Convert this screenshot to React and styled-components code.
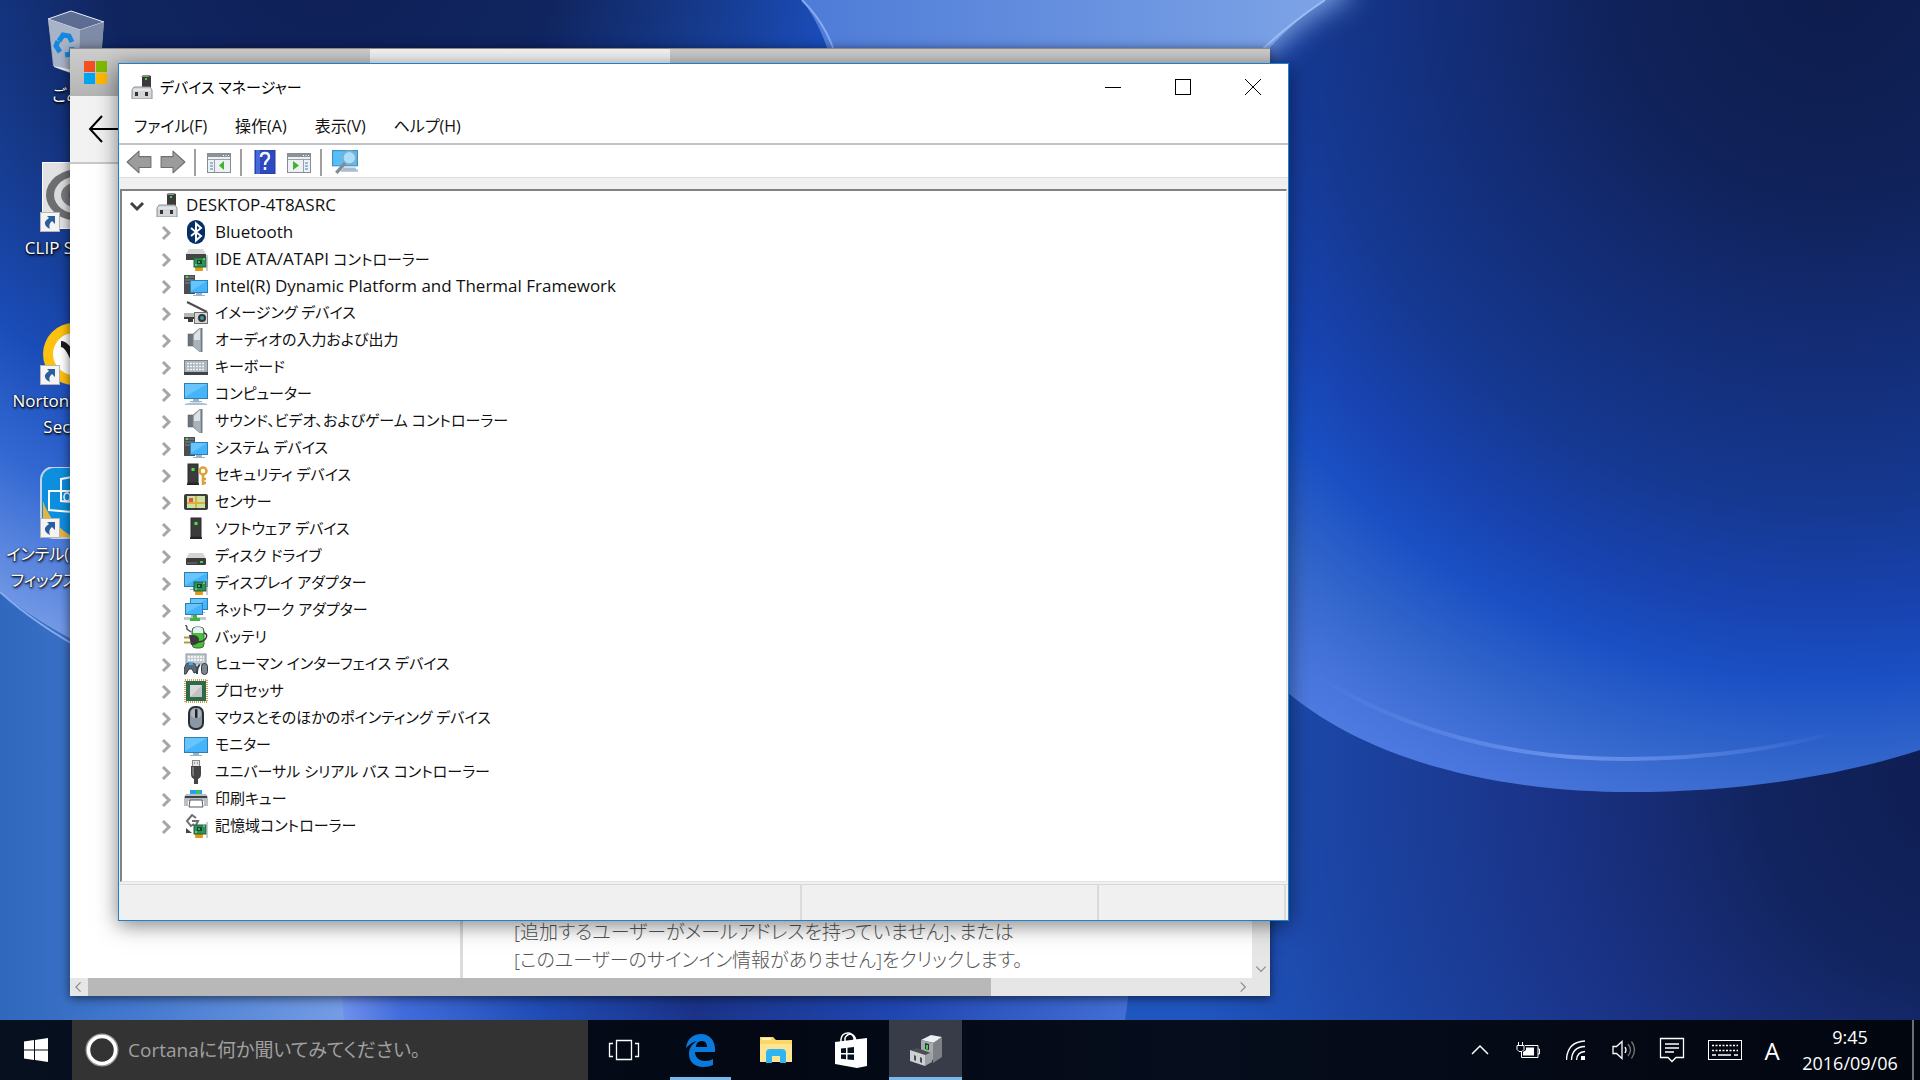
import React from "react";
import styled, { createGlobalStyle } from "styled-components";

const GlobalStyle = createGlobalStyle`
  * {
    box-sizing: border-box;
  }
  body {
    margin: 0;
    overflow: hidden;
    font-family: "Open Sans", "Noto Sans CJK JP", sans-serif;
    font-feature-settings: "palt";
    font-size: 16px;
    color: #111;
  }
  button {
    border: none;
    padding: 0;
    background: none;
    font: inherit;
    font-feature-settings: inherit;
    color: inherit;
  }
  svg {
    display: block;
  }
`;

const Screen = styled.div`
  display: flex;
  flex-direction: column;
  height: 100vh;
  background: #1c4cab;
`;

const Workspace = styled.main`
  flex: 1;
  min-height: 0;
  position: relative;
  overflow: hidden;
`;

const WallpaperSvg = styled.svg`
  position: absolute;
  inset: 0;
  width: 100%;
  height: 100%;
`;

const Shortcuts = styled.div`
  position: relative;
  display: flex;
  flex-direction: column;
  width: 150px;
`;

const Shortcut = styled.button`
  display: flex;
  flex-direction: column;
  align-items: center;
  height: 153px;
  padding-top: 8px;
  color: #fff;
  font-size: ${(p) => (p.$latin ? "17px" : "16px")};
  line-height: 26px;
  white-space: nowrap;
  text-shadow: 1px 1px 3px #000, 0 1px 2px #000;
`;

const Window = styled.section`
  position: absolute;
  display: flex;
  flex-direction: column;
  background: #fff;
`;

const BrowserWindow = styled(Window)`
  top: 48px;
  right: 650px;
  bottom: 24px;
  left: 70px;
  border-top: 1px solid #8d8d8d;
  box-shadow: 0 2px 10px rgba(0, 0, 0, 0.6);
`;

const TabStrip = styled.div`
  display: flex;
  height: 47px;
  background: linear-gradient(#cdcdcd, #b4b4b4);
`;

const SiteTab = styled.div`
  width: 300px;
  padding: 12px 14px;
`;

const ActiveTab = styled.div`
  width: 300px;
  background: linear-gradient(#f4f4f4, #e4e4e4);
`;

const BrowserBar = styled.div`
  display: flex;
  align-items: center;
  height: 68px;
  padding-left: 17px;
  background: #f2f2f2;
  border-bottom: 2px solid #c9c9c9;
`;

const BrowserBody = styled.div`
  flex: 1;
  display: flex;
  min-height: 0;
`;

const PageNav = styled.div`
  width: 393px;
  border-right: 3px solid #dcdcdc;
`;

const PageText = styled.div`
  flex: 1;
  display: flex;
  align-items: flex-end;
  padding: 0 0 4px 51px;
  color: #555;
  font-size: 19px;
  font-weight: 300;
  line-height: 28px;

  p {
    margin: 0;
  }
`;

const VerticalBar = styled.div`
  display: flex;
  align-items: flex-end;
  justify-content: center;
  width: 18px;
  background: #e6e6e6;
`;

const HorizontalBar = styled.div`
  display: flex;
  align-items: center;
  height: 18px;
  background: #e6e6e6;
`;

const ScrollThumb = styled.div`
  width: 903px;
  height: 18px;
  background: #b8b8b8;
`;

const ScrollButton = styled.button`
  display: flex;
  align-items: center;
  justify-content: center;
  width: 18px;
  height: 18px;
  margin-left: ${(p) => (p.$end ? "auto" : "0")};
  margin-right: ${(p) => (p.$end ? "18px" : "0")};
`;

const ManagerWindow = styled(Window)`
  top: 63px;
  right: 631px;
  bottom: 99px;
  left: 118px;
  border: 1px solid #1883d7;
  box-shadow: 0 4px 20px rgba(0, 0, 0, 0.5);
`;

const TitleBar = styled.header`
  display: flex;
  align-items: center;
  height: 45px;
  padding-left: 11px;
  gap: 6px;
  color: #000;

  h1 {
    flex: 1;
    margin: 0;
    font-size: 15px;
    font-weight: 400;
  }
`;

const WindowButtons = styled.div`
  display: flex;
  align-self: stretch;
`;

const WindowButton = styled.button`
  display: flex;
  align-items: center;
  justify-content: center;
  width: 70px;
`;

const MenuBar = styled.nav`
  display: flex;
  align-items: center;
  gap: 28px;
  height: 36px;
  padding: 0 0 2px 15px;
  border-bottom: 2px solid #c0c3c9;
`;

const Toolbar = styled.div`
  display: flex;
  align-items: center;
  gap: 8px;
  height: 33px;
  padding: 2px 0 0 7px;
  border-bottom: 1px solid #dcdcdc;
`;

const ToolButton = styled.button`
  display: flex;
  justify-content: center;
  width: 26px;
`;

const Separator = styled.span`
  width: 2px;
  height: 27px;
  margin-right: 2px;
  background: #a0a0a0;
`;

const TreeFrame = styled.div`
  flex: 1;
  display: flex;
  min-height: 0;
  padding: 11px 1px 2px 1px;
  background: #f0f0f0;
`;

const Tree = styled.ul`
  flex: 1;
  margin: 0;
  padding: 0;
  list-style: none;
  background: #fff;
  border: 2px solid #828282;
  border-right: 1px solid #e3e3e3;
  border-bottom: 1px solid #e3e3e3;
`;

const Branch = styled.ul`
  margin: 0;
  padding: 0;
  list-style: none;
`;

const Row = styled.div`
  display: flex;
  align-items: center;
  gap: 7px;
  height: 27px;
  padding-left: ${(p) => (p.$depth ? "35px" : "6px")};
  line-height: 27px;
  white-space: nowrap;
`;

const Toggle = styled.button`
  display: flex;
  align-items: center;
  justify-content: center;
  width: 18px;
  height: 20px;
  margin-right: 2px;
  padding-top: 2px;
`;

const DeviceName = styled.span`
  font-size: 15px;
`;

const Latin = styled.span`
  font-size: 17px;
`;

const StatusBar = styled.footer`
  display: flex;
  height: 36px;
  border-top: 1px solid #d8d8d8;
  background: #f0f0f0;
`;

const StatusCell = styled.div`
  flex: ${(p) => p.$grow};
  margin-right: 2px;
  border-right: 2px solid #dadada;
`;

const Taskbar = styled.footer`
  display: flex;
  height: 60px;
  background: linear-gradient(90deg, #07101f, #030814 40%, #060d1c 62%, #02060f);
  color: #fff;
`;

const StartButton = styled.button`
  display: flex;
  align-items: center;
  justify-content: center;
  width: 72px;
`;

const SearchBox = styled.label`
  display: flex;
  align-items: center;
  gap: 9px;
  width: 516px;
  padding-left: 13px;
  background: #333;
`;

const SearchInput = styled.input`
  flex: 1;
  padding: 0;
  border: none;
  outline: none;
  background: none;
  color: #fff;
  font: inherit;
  font-size: 19px;
  font-feature-settings: "palt";

  &::placeholder {
    color: #a0a0a0;
    opacity: 1;
  }
`;

const TaskButtons = styled.div`
  display: flex;
  gap: 2px;
  padding-left: 4px;
`;

const TaskButton = styled.button`
  position: relative;
  display: flex;
  align-items: center;
  justify-content: center;
  width: 73px;
  background: ${(p) => (p.$active ? "#383c48" : "transparent")};

  &::after {
    content: "";
    position: absolute;
    right: ${(p) => (p.$active ? "0" : "6px")};
    bottom: 0;
    left: ${(p) => (p.$active ? "0" : "6px")};
    height: 3px;
    background: ${(p) => (p.$active || p.$open ? "#76b9ed" : "transparent")};
  }
`;

const Tray = styled.div`
  display: flex;
  margin-left: auto;
`;

const TrayButton = styled.button`
  display: flex;
  align-items: center;
  justify-content: center;
  width: ${(p) => p.$width || 48}px;
  font-size: 24px;
`;

const Clock = styled.button`
  width: 120px;
  font-size: 18px;
  line-height: 26px;
`;

const ShowDesktop = styled.button`
  width: 8px;
  margin-left: 2px;
  border-left: 2px solid #6a6e76;
`;

/* ---------- small drawings shared by several icons ---------- */

const Tower = ({ x = 0 }) => (
  <g transform={`translate(${x} 0)`}>
    <path d="M3 22h12v-1.500l-1.500-1.500h-9L3 20.500z" fill="#222" />
    <rect x="4" y="1" width="10" height="19" fill="#3b3b3b" stroke="#2a2a2a" />
    <rect x="7.500" y="5" width="3" height="3" fill="#44e844" />
  </g>
);

const Screenlet = ({ x = 0, y = 0, w = 24, h = 15 }) => (
  <g>
    <path d={`M${x + w / 2 - 3} ${y + h}h6v2h3v1h-12v-1h3z`} fill="#9fb2c4" />
    <rect x={x + 0.5} y={y + 0.5} width={w - 1} height={h - 1} fill="#45b4fb" stroke="#2c7fae" />
    <path d={`M${x + 1} ${y + 1}h${w - 2}L${x + 1} ${y + h - 2}z`} fill="#7fcffd" opacity="0.6" />
  </g>
);

const Card = () => (
  <g>
    <rect x="11" y="20" width="8" height="4" fill="#f0a41c" />
    <path d="M13 20v4M15 20v4M17 20v4" stroke="#b87200" strokeWidth="0.5" />
    <rect x="10" y="11" width="12" height="9" fill="#2f9058" stroke="#1d6238" />
    <rect x="13" y="13" width="5" height="4" fill="#0f4a28" />
    <path d="M14 15h2M19 12h2M11 18h2" stroke="#9ff0b8" />
    <path d="M23 8v16" stroke="#9aa0a5" />
  </g>
);

const Speaker = () => (
  <g>
    <rect x="4" y="6" width="6" height="12" fill="#6c747c" stroke="#4f565c" strokeWidth="0.5" />
    <path d="M9 6 16 0h2v24h-2L9 18z" fill="#aab2ba" stroke="#7b838b" strokeWidth="0.7" />
    <path d="M10 7l6-6v11h-6z" fill="#dde2e6" />
    <path d="M17.500 0v24" stroke="#747c84" strokeWidth="1.5" />
  </g>
);

const SystemDrawing = () => (
  <g>
    <rect x="0" y="1" width="11" height="19" fill="#4a4e52" />
    <path d="M1 3h9M1 6h9M1 9h9" stroke="#85898d" />
    <rect x="2" y="2" width="2" height="2" fill="#4be04b" />
    <Screenlet x={6} y={6} w={18} h={13} />
  </g>
);

const drawings = {
  root: (
    <g>
      <path d="M12 12V1l6-1 3 1v11z" fill="#3a3a3a" />
      <path d="M11 2l2-2h7l-1 2z" fill="#8a8a8a" />
      <rect x="15" y="3" width="2" height="2" fill="#39d839" />
      <path d="M4 12h16l2 3v9H2v-9z" fill="#d3d5d9" stroke="#8c9096" />
      <path d="M3 15h18" stroke="#f3f3f3" />
      <path d="M5 17h3v4H5zM15 17h3v4h-3z" fill="#333" />
    </g>
  ),
  bluetooth: (
    <g>
      <rect x="3" y="0" width="18" height="24" rx="9" fill="#062f66" />
      <path d="M7 8l10 8-5 4.500v-17L17 8 7 16" fill="none" stroke="#fff" strokeWidth="2" />
    </g>
  ),
  ide: (
    <g>
      <path d="M5 2h14l3 5H2z" fill="#d8d8d8" />
      <rect x="2" y="7" width="20" height="6" fill="#444" />
      <Card />
    </g>
  ),
  system: <SystemDrawing />,
  imaging: (
    <g>
      <path d="M3 1l20 10" stroke="#4d4d4d" strokeWidth="2" />
      <path d="M0 12h12v4H0z" fill="#b5b5b5" />
      <path d="M0 16h12v2h-3v3H4v-3H0z" fill="#3c3c3c" />
      <rect x="10.500" y="11.500" width="13" height="11" fill="#d5d5d5" stroke="#707070" />
      <circle cx="18" cy="17" r="4" fill="#333" />
      <circle cx="18" cy="17" r="2" fill="#3d98a8" />
    </g>
  ),
  speaker: <Speaker />,
  keyboard: (
    <g>
      <rect x="0.5" y="5.500" width="23" height="14" fill="#aeb6be" stroke="#7d858d" />
      <path d="M3 8.500h18M3 11.500h18M3 14.500h18" stroke="#f2f4f6" strokeWidth="1.5" strokeDasharray="2 1" />
      <rect x="0" y="17" width="24" height="3" fill="#3f4448" />
    </g>
  ),
  computer: (
    <g>
      <Screenlet y={1} h={16} />
      <path d="M1 22c5-2 17-2 22 0v1H1z" fill="#a9c0d4" />
    </g>
  ),
  security: (
    <g>
      <Tower x={0} />
      <circle cx="19" cy="8" r="3.5" fill="none" stroke="#d9a23a" strokeWidth="2.5" />
      <path d="M19 11v11M19 16h3M19 20h3" stroke="#d9a23a" strokeWidth="2.5" />
    </g>
  ),
  sensor: (
    <g>
      <rect x="0" y="4" width="24" height="16" rx="2" fill="#3d3d3d" />
      <rect x="3" y="6" width="18" height="12" fill="#c9e3a5" />
      <path d="M3 13h18M12 6v12" stroke="#e0ad3a" strokeWidth="2" />
      <rect x="5" y="8" width="4" height="4" fill="#e2504e" />
    </g>
  ),
  software: <Tower x={3} />,
  disk: (
    <g>
      <path d="M5 9h14l3 6H2z" fill="#d4d4d4" />
      <rect x="2" y="14" width="20" height="7" rx="1" fill="#3c3c3c" />
      <rect x="16" y="17" width="3" height="2" fill="#38dd38" />
      <path d="M3 19h10" stroke="#777" />
    </g>
  ),
  display: (
    <g>
      <Screenlet y={1} h={15} />
      <Card />
    </g>
  ),
  network: (
    <g>
      <Screenlet x={6} y={0} w={18} h={12} />
      <Screenlet x={1} y={5} w={18} h={12} />
      <path d="M0 20.500h22" stroke="#c4c9cd" strokeWidth="3" />
      <path d="M6 20h3v-3h4v3h3v3H6z" fill="#41b33f" />
    </g>
  ),
  battery: (
    <g>
      <rect x="8" y="2" width="12" height="21" rx="4" fill="#49bd3c" stroke="#3d6d38" />
      <path d="M9 8V5q0-3 5-3t5 3v3z" fill="#e9edf7" />
      <path d="M20 8q4 1 2 5t-9 4" fill="none" stroke="#333" strokeWidth="1.5" />
      <path d="M1 0q2 0 2 4l4 3" fill="none" stroke="#555" strokeWidth="1.5" />
      <path d="M0 12.500h7M0 17.500h7" stroke="#b39a45" strokeWidth="2" />
      <path d="M5 10h5q5 1 5 5t-5 5H7z" fill="#3b3b3b" />
    </g>
  ),
  hid: (
    <g>
      <rect x="2" y="2" width="20" height="10" fill="#c2cad2" stroke="#8c949c" />
      <path d="M4 5h16M4 8h16" stroke="#fff" strokeDasharray="2 1" strokeWidth="1.5" />
      <path d="M0 22q0-10 4-11h5q4 1 4 9l-3 1-2-4H5l-3 5z" fill="#5c6873" stroke="#39424a" />
      <rect x="5" y="10" width="4" height="3" fill="#3fa9f5" />
      <path d="M13 22q0-8 3-9" stroke="#39424a" fill="none" strokeWidth="2" />
      <rect x="17.500" y="11.500" width="6" height="11" rx="3" fill="#7a8792" stroke="#2f363c" />
    </g>
  ),
  processor: (
    <g>
      <rect x="1" y="1" width="22" height="22" fill="none" stroke="#c9a45a" strokeWidth="2" strokeDasharray="1 1" />
      <rect x="2" y="2" width="20" height="20" fill="#2c6b4a" />
      <rect x="6" y="6" width="12" height="12" fill="#d9d9d9" />
      <path d="M18 6v12H6z" fill="#c2c2c2" />
    </g>
  ),
  mouse: (
    <g>
      <rect x="5" y="1" width="14" height="22" rx="6" fill="#8a97a5" stroke="#2b2f33" strokeWidth="2" />
      <rect x="7" y="3" width="10" height="9" rx="4" fill="#aab5c0" />
      <rect x="11" y="3" width="2.5" height="9" rx="1" fill="#222" />
    </g>
  ),
  monitor: <Screenlet y={4} h={16} />,
  usb: (
    <g>
      <rect x="8.500" y="0.5" width="7" height="6" fill="#e4e4e4" stroke="#8a8a8a" />
      <path d="M10 3h1M13 3h1" stroke="#555" />
      <path d="M7 6h10v8q0 4-3 5v5h-4v-5q-3-1-3-5z" fill="#454545" />
      <path d="M8 7h2v9H9q-1-1-1-3z" fill="#777" />
    </g>
  ),
  printer: (
    <g>
      <rect x="6" y="3" width="12" height="5" fill="#2a9df4" />
      <rect x="12" y="3" width="4" height="5" fill="#3ec45a" />
      <path d="M2 7h20l2 3v9h-4v-5H4v5H0v-9z" fill="#b9bfc5" />
      <path d="M1 10h22" stroke="#3d4247" strokeWidth="2" />
      <path d="M6 13h12l1 7H5z" fill="#fff" stroke="#55595d" />
    </g>
  ),
  storage: (
    <g>
      <path d="M12 4 8 1 3 7l4 5 3-2M8 7h6l-2 4" fill="none" stroke="#6b6f73" strokeWidth="2" />
      <path d="M2 14l6 5H2z" fill="#444" />
      <Card />
    </g>
  ),
  help: (
    <g>
      <rect x="2" y="0" width="20" height="24" fill="#2e49c0" stroke="#203a9e" />
      <rect x="3" y="0" width="4" height="24" fill="#4769dc" />
      <path d="M8 7q0-4 4-4t4 4q0 2-2 3.500t-2 4.500M12 17v3" fill="none" stroke="#f4f6ff" strokeWidth="2.5" />
    </g>
  ),
  console: (
    <g>
      <rect x="0.5" y="3.5" width="23" height="19" fill="#eef1f4" stroke="#878d94" />
      <rect x="1" y="4" width="22" height="3" fill="#8a929b" />
      <path d="M16 5.500h1M18.500 5.500h1M21 5.500h1" stroke="#fff" />
      <path d="M1 9.500h22M7.500 10v12" stroke="#9aa0a6" />
      <path d="M3 13h3M3 16h3M3 19h3" stroke="#3f7fc4" />
      <path d="M17 11v9l-5-4.500z" fill="#43b32f" />
    </g>
  ),
  action: (
    <g>
      <rect x="0.5" y="3.5" width="23" height="19" fill="#eef1f4" stroke="#878d94" />
      <rect x="1" y="4" width="22" height="3" fill="#8a929b" />
      <path d="M16 5.500h1M18.500 5.500h1M21 5.500h1" stroke="#fff" />
      <path d="M1 9.500h22M16.500 10v12" stroke="#9aa0a6" />
      <path d="M18 13h3M18 16h3M18 19h3" stroke="#3f7fc4" />
      <path d="M6 11v9l6-4.500z" fill="#43b32f" />
    </g>
  ),
  scan: (
    <g>
      <path d="M10 17h12v2h2v2H8v-2h2z" fill="#a8bccb" />
      <rect x="0.5" y="1.500" width="23" height="14" fill="#59bdf6" stroke="#3a8fc0" />
      <circle cx="16" cy="8" r="6" fill="#a9defc" stroke="#86aec4" strokeWidth="1.5" />
      <path d="M12 13l-8 9" stroke="#7d8d98" strokeWidth="3" />
    </g>
  ),
  back: (
    <path d="M1 12 12 2v5h11v10H12v5z" fill="#9c9c9c" stroke="#6f6f6f" strokeLinejoin="round" />
  ),
  forward: (
    <path d="M23 12 12 2v5H1v10h11v5z" fill="#9c9c9c" stroke="#6f6f6f" strokeLinejoin="round" />
  ),
};

const Icon = ({ name, size = 24 }) => (
  <svg width={size} height={size} viewBox="0 0 24 24" aria-hidden="true">
    {drawings[name]}
  </svg>
);

const chevrons = {
  left: "M11 3 5 9l6 6",
  right: "M6 3l6 6-6 6",
  down: "M3 6l6 6 6-6",
  up: "M1 13l8-8 8 8",
};

const Chevron = ({ dir, size = 18, color = "#a6a6a6", width = 2 }) => (
  <svg width={size} height={size} viewBox="0 0 18 18" aria-hidden="true">
    <path d={chevrons[dir]} fill="none" stroke={color} strokeWidth={width} />
  </svg>
);

const Wallpaper = () => (
  <WallpaperSvg viewBox="0 0 1920 1020" preserveAspectRatio="none" aria-hidden="true">
    <defs>
      <radialGradient id="rightBubble" gradientUnits="userSpaceOnUse" cx="1830" cy="-20" r="900">
        <stop offset="0" stopColor="#0d1c4c" />
        <stop offset="0.24" stopColor="#10225a" />
        <stop offset="0.4" stopColor="#132c74" />
        <stop offset="0.58" stopColor="#153890" />
        <stop offset="0.7" stopColor="#1843b0" />
        <stop offset="0.78" stopColor="#1a50c4" />
        <stop offset="0.88" stopColor="#3568cc" />
        <stop offset="0.94" stopColor="#4472d8" />
        <stop offset="1" stopColor="#4f7ce2" />
      </radialGradient>
      <radialGradient id="leftBubble" gradientUnits="userSpaceOnUse" cx="330" cy="-60" r="760">
        <stop offset="0" stopColor="#0f1f56" />
        <stop offset="0.3" stopColor="#10255f" />
        <stop offset="0.5" stopColor="#163a8c" />
        <stop offset="0.66" stopColor="#1a4cb8" />
        <stop offset="0.8" stopColor="#3368d2" />
        <stop offset="1" stopColor="#7b9fe8" />
      </radialGradient>
      <radialGradient id="deep" gradientUnits="userSpaceOnUse" cx="1960" cy="780" r="800">
        <stop offset="0" stopColor="#0e1d52" />
        <stop offset="0.25" stopColor="#12245f" />
        <stop offset="0.5" stopColor="#1a3285" />
        <stop offset="0.75" stopColor="#1b42a0" />
        <stop offset="1" stopColor="#2056bf" />
      </radialGradient>
      <linearGradient id="lowLeft" x1="0" x2="1">
        <stop offset="0" stopColor="#2f68bd" />
        <stop offset="0.4" stopColor="#4479cf" />
        <stop offset="1" stopColor="#759de5" />
      </linearGradient>
      <linearGradient id="lowBubble" x1="0" x2="1">
        <stop offset="0" stopColor="#7394ee" />
        <stop offset="0.08" stopColor="#426cdb" />
        <stop offset="0.26" stopColor="#204bb3" />
        <stop offset="0.45" stopColor="#1a3388" />
        <stop offset="0.7" stopColor="#2046b0" />
        <stop offset="1" stopColor="#4470d6" />
      </linearGradient>
      <linearGradient id="topBand" x1="0" x2="1">
        <stop offset="0" stopColor="#4a78d6" />
        <stop offset="1" stopColor="#82a8e8" />
      </linearGradient>
      <linearGradient id="rim" gradientUnits="userSpaceOnUse" x1="1310" y1="0" x2="1840" y2="0">
        <stop offset="0" stopColor="#6a92ee" stopOpacity="0" />
        <stop offset="0.5" stopColor="#6a92ee" />
        <stop offset="1" stopColor="#6a92ee" stopOpacity="0" />
      </linearGradient>
      <filter id="soft" x="-1" y="-1" width="3" height="3">
        <feGaussianBlur stdDeviation="14" />
      </filter>
      <clipPath id="rightClip">
        <path d="M1325 0Q1180 100 1150 350q0 230 138 343c92 76 230 99 342 99 110 0 210-16 290-42V0z" />
      </clipPath>
    </defs>
    <rect width="1920" height="1020" fill="url(#deep)" />
    <rect width="345" height="1020" fill="url(#lowLeft)" />
    <path d="M338 900q0 70 6 120h781q8-50 8-120z" fill="url(#lowBubble)" />
    <rect x="760" width="620" height="200" fill="url(#topBand)" />
    <path d="M0 0h802q46 60 46 200Q800 680 300 690 120 690 0 592z" fill="url(#leftBubble)" />
    <path d="M802 0q30 30 37 70M0 592q35 32 90 62" fill="none" stroke="#86aaf0" strokeWidth="2" />
    <g clipPath="url(#rightClip)">
      <rect x="1100" width="820" height="820" fill="url(#rightBubble)" />
      <path d="M1345-20q-80 35-125 110" fill="none" stroke="#7fa4e4" strokeWidth="34" filter="url(#soft)" />
      <path d="M1315 675c90 57 200 85 315 84 90-1 150-12 210-27" fill="none" stroke="url(#rim)" strokeWidth="4" />
    </g>
    <path d="M1325 0q-45 30-75 62" fill="none" stroke="#9dbcf2" strokeWidth="2" />
  </WallpaperSvg>
);

const ShortcutBadge = () => (
  <g>
    <rect x="1.500" y="51.500" width="19" height="19" fill="#f4f4f4" stroke="#b5b5b5" />
    <path d="M8 55h8v8l-3-3q-4 3-2 8-6-3-5-7 1-2 4-4z" fill="#2b5c9e" />
  </g>
);

const ShortcutIcon = ({ children }) => (
  <svg width="72" height="74" viewBox="0 0 72 74" aria-hidden="true">
    {children}
  </svg>
);

const MicrosoftLogo = () => (
  <svg width="23" height="23" viewBox="0 0 23 23" aria-hidden="true">
    <path d="M0 0h11v11H0z" fill="#f25022" />
    <path d="M12 0h11v11H12z" fill="#7fba00" />
    <path d="M0 12h11v11H0z" fill="#00a4ef" />
    <path d="M12 12h11v11H12z" fill="#ffb900" />
  </svg>
);

// latin: leading part of the name, set slightly larger than the kana
const devices = [
  { icon: "bluetooth", latin: "Bluetooth" },
  { icon: "ide", latin: "IDE ATA/ATAPI ", name: "コントローラー" },
  { icon: "system", latin: "Intel(R) Dynamic Platform and Thermal Framework" },
  { icon: "imaging", name: "イメージング デバイス" },
  { icon: "speaker", name: "オーディオの入力および出力" },
  { icon: "keyboard", name: "キーボード" },
  { icon: "computer", name: "コンピューター" },
  { icon: "speaker", name: "サウンド、ビデオ、およびゲーム コントローラー" },
  { icon: "system", name: "システム デバイス" },
  { icon: "security", name: "セキュリティ デバイス" },
  { icon: "sensor", name: "センサー" },
  { icon: "software", name: "ソフトウェア デバイス" },
  { icon: "disk", name: "ディスク ドライブ" },
  { icon: "display", name: "ディスプレイ アダプター" },
  { icon: "network", name: "ネットワーク アダプター" },
  { icon: "battery", name: "バッテリ" },
  { icon: "hid", name: "ヒューマン インターフェイス デバイス" },
  { icon: "processor", name: "プロセッサ" },
  { icon: "mouse", name: "マウスとそのほかのポインティング デバイス" },
  { icon: "monitor", name: "モニター" },
  { icon: "usb", name: "ユニバーサル シリアル バス コントローラー" },
  { icon: "printer", name: "印刷キュー" },
  { icon: "storage", name: "記憶域コントローラー" },
];

const DesktopShortcuts = () => (
  <Shortcuts>
    <Shortcut>
      <ShortcutIcon>
        <path d="M9 11l23-8 33 11-4 52-27-3-20-5z" fill="#9aa6bd" opacity="0.9" />
        <path d="M9 11l23-8 33 11-24 8z" fill="#5d6c93" stroke="#e4e9f2" />
        <path d="M41 22l24-8-5 50-20 4z" fill="#7f8ca8" />
        <path d="M9 11l32 11-1 41-25-5z" fill="#a9b3c8" />
        <path d="M15 58l25 5v5l-25-9z" fill="#e9eaec" />
        <path
          d="M20 33l4-6 6 1 3 6M33 39l-1 7-6 1M21 44l-4-6 2-5"
          fill="none"
          stroke="#1787dd"
          strokeWidth="5"
        />
      </ShortcutIcon>
      ごみ箱
    </Shortcut>
    <Shortcut $latin>
      <ShortcutIcon>
        <rect x="3.5" y="1.500" width="66" height="66" fill="#e2e2e2" stroke="#fafafa" />
        <ellipse cx="40" cy="34" rx="33" ry="26" fill="#6c6e72" />
        <ellipse cx="40" cy="34" rx="25" ry="19" fill="#dcdcdc" />
        <ellipse cx="40" cy="34" rx="18" ry="13" fill="#77797d" />
        <ellipse cx="40" cy="34" rx="10" ry="7" fill="#55575b" />
        <ShortcutBadge />
      </ShortcutIcon>
      CLIP STUDIO
    </Shortcut>
    <Shortcut $latin>
      <ShortcutIcon>
        <circle cx="35" cy="40" r="31" fill="#fdc10f" />
        <circle cx="35" cy="40" r="21" fill="#fff" />
        <path d="M22 30q6 0 12 14l14-24" fill="none" stroke="#1b1b1b" strokeWidth="6" />
        <ShortcutBadge />
      </ShortcutIcon>
      Norton Internet
      <br />
      Security
    </Shortcut>
    <Shortcut>
      <ShortcutIcon>
        <rect x="2" y="0" width="68" height="71" rx="13" fill="#0d8fe0" stroke="#c3d3e4" strokeWidth="2" />
        <path d="M4 34q8 24 30 36H8q-4-2-4-8z" fill="#e8b33a" />
        <path d="M22 12l22-4v28l-22-2zM10 24h34v22l-34-3z" fill="none" stroke="#fff" strokeWidth="2" />
        <ellipse cx="28" cy="30" rx="3" ry="4" fill="none" stroke="#fff" strokeWidth="1.5" />
        <ShortcutBadge />
      </ShortcutIcon>
      インテル(R) HD グラ
      <br />
      フィックス・コント...
    </Shortcut>
  </Shortcuts>
);

const Browser = () => (
  <BrowserWindow>
    <TabStrip>
      <SiteTab>
        <MicrosoftLogo />
      </SiteTab>
      <ActiveTab />
    </TabStrip>
    <BrowserBar>
      <button aria-label="戻る">
        <svg width="36" height="28" viewBox="0 0 36 28" aria-hidden="true">
          <path d="M15 1 3 14l12 13M3 14h32" fill="none" stroke="#000" strokeWidth="2" />
        </svg>
      </button>
    </BrowserBar>
    <BrowserBody>
      <PageNav />
      <PageText>
        <p>
          [追加するユーザーがメールアドレスを持っていません]、または
          <br />
          [このユーザーのサインイン情報がありません]をクリックします。
        </p>
      </PageText>
      <VerticalBar>
        <ScrollButton aria-label="下へ">
          <Chevron dir="down" size={14} color="#8a8a8a" width={1.5} />
        </ScrollButton>
      </VerticalBar>
    </BrowserBody>
    <HorizontalBar>
      <ScrollButton aria-label="左へ">
        <Chevron dir="left" size={14} color="#8a8a8a" width={1.5} />
      </ScrollButton>
      <ScrollThumb />
      <ScrollButton aria-label="右へ" $end>
        <Chevron dir="right" size={14} color="#8a8a8a" width={1.5} />
      </ScrollButton>
    </HorizontalBar>
  </BrowserWindow>
);

const DeviceManager = () => (
  <ManagerWindow>
    <TitleBar>
      <Icon name="root" />
      <h1>デバイス マネージャー</h1>
      <WindowButtons>
        <WindowButton aria-label="最小化">
          <svg width="16" height="16" viewBox="0 0 16 16">
            <path d="M0 8.500h16" stroke="#000" />
          </svg>
        </WindowButton>
        <WindowButton aria-label="最大化">
          <svg width="16" height="16" viewBox="0 0 16 16">
            <rect x="0.5" y="0.5" width="15" height="15" fill="none" stroke="#000" />
          </svg>
        </WindowButton>
        <WindowButton aria-label="閉じる">
          <svg width="16" height="16" viewBox="0 0 16 16">
            <path d="M0 0l16 16M16 0 0 16" stroke="#000" />
          </svg>
        </WindowButton>
      </WindowButtons>
    </TitleBar>
    <MenuBar>
      <button>ファイル(F)</button>
      <button>操作(A)</button>
      <button>表示(V)</button>
      <button>ヘルプ(H)</button>
    </MenuBar>
    <Toolbar>
      <ToolButton aria-label="戻る">
        <Icon name="back" size={26} />
      </ToolButton>
      <ToolButton aria-label="進む">
        <Icon name="forward" size={26} />
      </ToolButton>
      <Separator />
      <ToolButton aria-label="コンソール ツリー">
        <Icon name="console" />
      </ToolButton>
      <Separator />
      <ToolButton aria-label="ヘルプ">
        <Icon name="help" />
      </ToolButton>
      <ToolButton aria-label="操作ウィンドウ">
        <Icon name="action" />
      </ToolButton>
      <Separator />
      <ToolButton aria-label="ハードウェア変更のスキャン">
        <Icon name="scan" size={26} />
      </ToolButton>
    </Toolbar>
    <TreeFrame>
      <Tree>
        <li>
          <Row>
            <Toggle aria-label="折りたたむ">
              <Chevron dir="down" color="#404040" width={3} />
            </Toggle>
            <Icon name="root" />
            <Latin>DESKTOP-4T8ASRC</Latin>
          </Row>
          <Branch>
            {devices.map(({ icon, latin, name }) => (
              <li key={latin || name}>
                <Row $depth={1}>
                  <Toggle aria-label="展開">
                    <Chevron dir="right" width={3} />
                  </Toggle>
                  <Icon name={icon} />
                  <DeviceName>
                    {latin && <Latin>{latin}</Latin>}
                    {name}
                  </DeviceName>
                </Row>
              </li>
            ))}
          </Branch>
        </li>
      </Tree>
    </TreeFrame>
    <StatusBar>
      <StatusCell $grow={684} />
      <StatusCell $grow={294} />
      <StatusCell $grow={184} />
    </StatusBar>
  </ManagerWindow>
);

const App = () => (
  <Screen>
    <GlobalStyle />
    <Workspace>
      <Wallpaper />
      <DesktopShortcuts />
      <Browser />
      <DeviceManager />
    </Workspace>
    <Taskbar>
      <StartButton aria-label="スタート">
        <svg width="24" height="24" viewBox="0 0 24 24">
          <path d="M0 3.500 10 2v9.500H0zM11 1.900 24 0v11.500H11zM0 12.500h10V22L0 20.500zM11 12.500h13V24l-13-1.900z" fill="#fff" />
        </svg>
      </StartButton>
      <SearchBox>
        <svg width="34" height="34" viewBox="0 0 34 34" aria-hidden="true">
          <circle cx="17" cy="17" r="15.5" fill="none" stroke="#999" strokeWidth="2" />
          <circle cx="17" cy="17" r="13.5" fill="none" stroke="#fff" strokeWidth="3.5" />
        </svg>
        <SearchInput type="text" aria-label="Cortana" placeholder="Cortanaに何か聞いてみてください。" />
      </SearchBox>
      <StartButton aria-label="タスク ビュー">
        <svg width="32" height="22" viewBox="0 0 32 22">
          <path d="M8.500 1.500h15v19h-15zM5 4.500H1.500v13H5M27 4.500h3.500v13H27" fill="none" stroke="#fff" strokeWidth="1.3" />
        </svg>
      </StartButton>
      <TaskButtons>
        <TaskButton aria-label="Microsoft Edge" $open>
          <svg width="32" height="34" viewBox="0 0 32 34">
            <path
              d="M1 15C2 6 8 1 16 1c9 0 14 7 14 15v3H10c0 6 5 9 10 9 4 0 6-1 8-2v6c-3 1-6 2-10 2C10 34 4 29 4 21c0-6 3-10 8-13-5 1-8 4-11 7zm10-1h11c0-4-2-6-5-6s-6 2-6 6z"
              fill="#0a7bdc"
            />
          </svg>
        </TaskButton>
        <TaskButton aria-label="エクスプローラー">
          <svg width="32" height="28" viewBox="0 0 32 28">
            <path d="M0 1h13l3 3h16v22H0z" fill="#fbd866" />
            <path d="M2 2h9v2H2z" fill="#fff3c0" />
            <path d="M0 8h32v18H0z" fill="#ffe494" />
            <path d="M6 27V17q0-4 4-4h12q4 0 4 4v10h-6v-7h-8v7z" fill="#2fb6f0" />
          </svg>
        </TaskButton>
        <TaskButton aria-label="ストア">
          <svg width="32" height="36" viewBox="0 0 32 36">
            <path d="M6 10V7q1-6 7-6 4 0 6 5v4M10 9V6q2-4 6-4 4 1 5 7" fill="none" stroke="#fff" strokeWidth="1.5" />
            <path d="M0 10l32-4v28l-10 2L0 32z" fill="#fff" />
            <path d="M6 16.500l5-.6V21H6zM12.500 15.700l6.500-.7v6h-6.500zM6 22.500h5v4.800l-5-.5zM12.500 22.500H19V28l-6.500-.6z" fill="#07101f" />
          </svg>
        </TaskButton>
        <TaskButton aria-label="デバイス マネージャー" $active>
          <svg width="32" height="32" viewBox="0 0 32 32">
            <path d="M11 6l10-5 11 2-8 6z" fill="#eceef0" />
            <path d="M11 6l12 3v17l-12-4z" fill="#a7abb0" />
            <path d="M23 9l9-6v20l-9 6z" fill="#7d8186" />
            <path d="M15 9l4 1v6l-4-1z" fill="#2c2f33" />
            <path d="M16 11h2v4h-2z" fill="#2fdd45" />
            <path d="M1 16l6-2 14 5-6 3z" fill="#4a4d51" />
            <path d="M0 16l15 5v11L0 27z" fill="#cdd0d3" />
            <path d="M15 21l7-3v10l-7 4z" fill="#9da1a6" />
            <path d="M4 21l2 1v5l-2-1zM10 23l2 1v5l-2-1z" fill="#4a4d51" />
          </svg>
        </TaskButton>
      </TaskButtons>
      <Tray>
        <TrayButton aria-label="隠れているインジケーター">
          <Chevron dir="up" color="#fff" width={1.5} />
        </TrayButton>
        <TrayButton aria-label="バッテリ">
          <svg width="24" height="18" viewBox="0 0 24 18">
            <path d="M9 4.500h13v12H5.500V11M22 8h1.500v5H22M2.500 1v3M6.500 1v3M1 4.500h7v4l-2 2H3l-2-2z" fill="none" stroke="#fff" />
            <path d="M10 6.500h8v8H7V11l3-2z" fill="#fff" />
          </svg>
        </TrayButton>
        <TrayButton aria-label="ネットワーク">
          <svg width="20" height="20" viewBox="0 0 20 20">
            <path d="M.5 20Q1 2 19 1M5.500 20Q6 7 19 6.500M10.500 20q.5-8 8.500-8.500" fill="none" stroke="#fff" strokeWidth="1.3" />
            <path d="M15 16h4v4h-4z" fill="#fff" />
          </svg>
        </TrayButton>
        <TrayButton aria-label="音量">
          <svg width="24" height="20" viewBox="0 0 24 20">
            <path d="M1 6.500h3.500L10 1.500v17l-5.500-5H1zM13 7q2 3 0 6" fill="none" stroke="#fff" strokeWidth="1.3" />
            <path d="M16 4q5 6 0 12M19.500 1.500q6 8 0 17" fill="none" stroke="#777" strokeWidth="1.3" />
          </svg>
        </TrayButton>
        <TrayButton aria-label="アクション センター">
          <svg width="26" height="26" viewBox="0 0 26 26">
            <path d="M1.500 1.500h23v19H17l-4 4-4-4H1.500zM6 7h14M6 11h14M6 15h9" fill="none" stroke="#fff" strokeWidth="1.3" />
          </svg>
        </TrayButton>
        <TrayButton aria-label="タッチ キーボード" $width={58}>
          <svg width="34" height="20" viewBox="0 0 34 20">
            <rect x="0.5" y="0.5" width="33" height="19" fill="none" stroke="#fff" />
            <path d="M4 5.500h26M4 10.500h26" stroke="#fff" strokeDasharray="2 1.500" strokeWidth="1.3" />
            <path d="M4 15h4M10 15h13M26 15h4" stroke="#fff" strokeWidth="1.3" />
          </svg>
        </TrayButton>
        <TrayButton $width={36}>A</TrayButton>
        <Clock>
          9:45
          <br />
          2016/09/06
        </Clock>
        <ShowDesktop aria-label="デスクトップの表示" />
      </Tray>
    </Taskbar>
  </Screen>
);

export default App;
